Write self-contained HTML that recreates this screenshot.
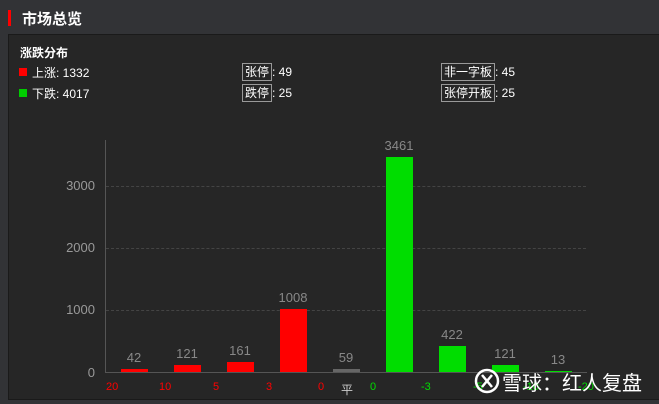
<!DOCTYPE html>
<html><head><meta charset="utf-8"><style>
*{margin:0;padding:0;box-sizing:border-box}
body{width:659px;height:404px;background:#323336;font-family:"Liberation Sans","Noto Sans CJK SC",sans-serif;position:relative;overflow:hidden;color:#fff}
.a{position:absolute;white-space:nowrap}
.panel{position:absolute;left:8px;top:34px;width:660px;height:366px;background:#262626;border:1px solid #1a1a1a}
.box{border:1px solid #999;padding:0 2px;font-size:12px;line-height:16px;display:inline-block}
.bar{position:absolute;width:27px}
.v{position:absolute;font-size:13px;color:#888;width:40px;text-align:center}
.g{position:absolute;left:106px;width:480px;border-top:1px dashed #444}
.yl{position:absolute;font-size:13px;color:#999;text-align:right;width:40px;left:55px}
.xl{position:absolute;top:381px;font-size:11px}
</style></head><body>
<div class="a" style="left:8px;top:10px;width:3px;height:16px;background:#f00"></div>
<div class="a" style="left:22px;top:8px;font-size:15px;font-weight:bold">市场总览</div>
<div class="panel"></div>
<div class="a" style="left:20px;top:44px;font-size:12px;font-weight:bold">涨跌分布</div>
<div class="a" style="left:19px;top:68px;width:8px;height:8px;background:#f00"></div>
<div class="a" style="left:32px;top:64px;font-size:12px">上涨: 1332</div>
<div class="a" style="left:19px;top:89px;width:8px;height:8px;background:#0c0"></div>
<div class="a" style="left:32px;top:85px;font-size:12px">下跌: 4017</div>
<div class="a" style="left:242px;top:63px;font-size:12px"><span class="box">张停</span>: 49</div>
<div class="a" style="left:242px;top:84px;font-size:12px"><span class="box">跌停</span>: 25</div>
<div class="a" style="left:441px;top:63px;font-size:12px"><span class="box">非一字板</span>: 45</div>
<div class="a" style="left:441px;top:84px;font-size:12px"><span class="box">张停开板</span>: 25</div>
<div class="a" style="left:105px;top:140px;width:1px;height:233px;background:#555"></div>
<div class="a" style="left:105px;top:372px;width:482px;height:1px;background:#555"></div>
<div class="g" style="top:186px"></div><div class="g" style="top:248px"></div><div class="g" style="top:310px"></div>
<div class="yl" style="top:178px">3000</div><div class="yl" style="top:240px">2000</div><div class="yl" style="top:302px">1000</div><div class="yl" style="top:365px">0</div>
<div class="bar" style="left:121px;top:369px;height:3px;background:#f00"></div><div class="v" style="left:114px;top:350px">42</div>
<div class="bar" style="left:174px;top:365px;height:7px;background:#f00"></div><div class="v" style="left:167px;top:346px">121</div>
<div class="bar" style="left:227px;top:362px;height:10px;background:#f00"></div><div class="v" style="left:220px;top:343px">161</div>
<div class="bar" style="left:280px;top:309px;height:63px;background:#f00"></div><div class="v" style="left:273px;top:290px">1008</div>
<div class="bar" style="left:333px;top:369px;height:3px;background:#666"></div><div class="v" style="left:326px;top:350px">59</div>
<div class="bar" style="left:386px;top:157px;height:215px;background:#0d0"></div><div class="v" style="left:379px;top:138px">3461</div>
<div class="bar" style="left:439px;top:346px;height:26px;background:#0d0"></div><div class="v" style="left:432px;top:327px">422</div>
<div class="bar" style="left:492px;top:365px;height:7px;background:#0d0"></div><div class="v" style="left:485px;top:346px">121</div>
<div class="bar" style="left:545px;top:371px;height:1px;background:#0d0"></div><div class="v" style="left:538px;top:352px">13</div>
<div class="xl" style="left:106px;color:#f00">20</div>
<div class="xl" style="left:159px;color:#f00">10</div>
<div class="xl" style="left:213px;color:#f00">5</div>
<div class="xl" style="left:266px;color:#f00">3</div>
<div class="xl" style="left:318px;color:#f00">0</div>
<div class="xl" style="left:341px;color:#ccc;font-size:12px">平</div>
<div class="xl" style="left:370px;color:#0d0">0</div>
<div class="xl" style="left:421px;color:#0d0">-3</div>
<div class="xl" style="left:473px;color:#0d0">-5</div>
<div class="xl" style="left:523px;color:#0d0">-10</div>
<div class="xl" style="left:578px;color:#0d0">-20</div>
<svg class="a" style="left:474px;top:368px" width="26" height="26" viewBox="0 0 26 26"><circle cx="13" cy="13" r="11" fill="none" stroke="#fff" stroke-width="2.5"/><path d="M8 7 L18 19 M18 7 L8 19" stroke="#fff" stroke-width="2.5" fill="none"/></svg>
<div class="a" style="left:502px;top:367px;font-size:20px;color:#fff">雪球：红人复盘</div>
</body></html>
